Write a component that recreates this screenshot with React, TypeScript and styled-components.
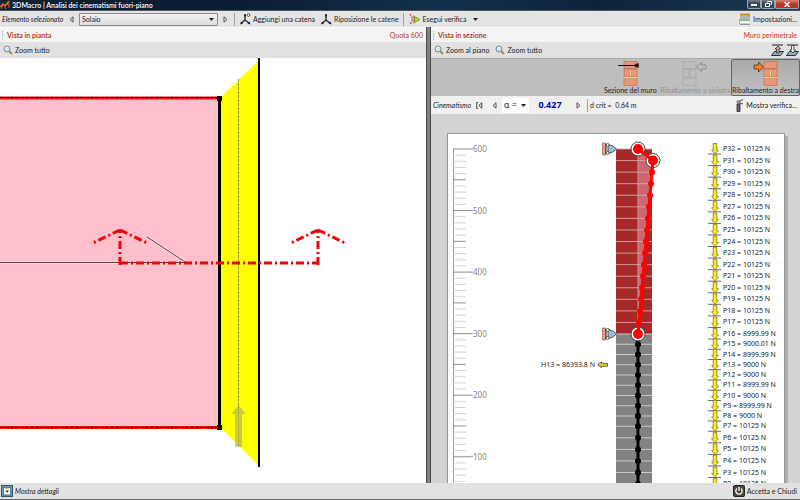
import React from "react";
import styled, { createGlobalStyle, css } from "styled-components";

const GlobalStyle = createGlobalStyle`
  *, *::before, *::after { box-sizing: border-box; }
  html, body, #root { height: 100%; }
  body {
    margin: 0;
    overflow: hidden;
    background: #d3d3d3;
    color: #222;
    font-family: Lato, "Open Sans", sans-serif;
    font-size: 7px;
    line-height: 9px;
  }
  button, input, select { font: inherit; color: inherit; }
  svg { display: block; flex: none; }
`;

const Shell = styled.div`
  display: flex;
  flex-direction: column;
  height: 100vh;
  border-bottom: 1px solid #6b6b6b;
`;

const TitleBar = styled.header`
  display: flex;
  align-items: center;
  height: 11px;
  flex: none;
  color: #fff;
  background: linear-gradient(90deg, #10202f 0%, #0b1d33 30%, #12304c 55%, #0d233b 75%, #1c3a55 100%);
  border-bottom: 1px solid #4d5660;
`;

const AppTitle = styled.h1`
  margin: 0 auto 0 2px;
  font-size: 7px;
  line-height: 9px;
  font-weight: 600;
`;

const WindowButtons = styled.div`
  display: flex;
  align-self: flex-start;
  margin-right: 1px;
`;

const WindowButton = styled.button<{ $close?: boolean }>`
  display: grid;
  place-items: center;
  width: ${(p) => (p.$close ? 24 : 14)}px;
  height: 9px;
  padding: 0;
  border: 1px solid #9aa5b0;
  border-top: 0;
  border-radius: 0 0 2px 2px;
  background: ${(p) =>
    p.$close
      ? "linear-gradient(#d88578, #b8362a 50%, #c2301f)"
      : "linear-gradient(#75828e, #2c3b4a 50%, #3b4b5b)"};
`;

const ToolBar = styled.div<{ $tone?: string; $height: number }>`
  display: flex;
  align-items: center;
  flex: none;
  height: ${(p) => p.$height}px;
  background: ${(p) => p.$tone ?? "#e4e4e4"};
`;

const Spacer = styled.div`
  flex: 1;
`;

const FieldLabel = styled.label<{ $width: number }>`
  width: ${(p) => p.$width}px;
  padding-left: 2px;
  font-style: italic;
  white-space: nowrap;
`;

const ToolButton = styled.button`
  display: flex;
  align-items: center;
  gap: 2px;
  padding: 0 3px;
  border: 0;
  background: none;
  white-space: nowrap;
`;

const Steps = styled(ToolButton)`
  justify-content: center;
  width: 15px;
  padding: 0;
`;

const SelectWrap = styled.div<{ $width: number; $plain?: boolean }>`
  display: grid;
  grid-template-columns: 1fr 8px;
  align-items: center;
  width: ${(p) => p.$width}px;
  height: ${(p) => (p.$plain ? 15 : 13)}px;
  ${(p) =>
    p.$plain
      ? css`
          background: #fff;
        `
      : css`
          border: 1px solid #8b8b8b;
          border-radius: 1px;
          background: linear-gradient(#f1f1f1, #dedede);
        `}
  svg { grid-area: 1 / 2; pointer-events: none; }
`;

const Select = styled.select<{ $size?: number }>`
  grid-area: 1 / 1 / 2 / 3;
  width: 100%;
  padding: 0 2px;
  border: 0;
  outline: 0;
  appearance: none;
  background: none;
  font-size: ${(p) => p.$size ?? 7}px;
  line-height: 10px;
`;

const Divider = styled.div`
  width: 1px;
  height: 13px;
  margin: 0 2px 0 1px;
  background: #a2a2a2;
`;

const Workspace = styled.main`
  display: grid;
  grid-template-columns: minmax(0, 426fr) 5px minmax(0, 369fr);
  flex: 1;
  min-height: 0;
`;

const Pane = styled.section`
  display: flex;
  flex-direction: column;
  min-width: 0;
  min-height: 0;
`;

const PaneHeader = styled.div`
  display: flex;
  align-items: center;
  justify-content: space-between;
  flex: none;
  height: 15px;
  padding: 0 3px 0 2px;
  background: #f4f4f4;
  border-top: 1px solid #fcfcfc;
  color: #b4401c;
`;

const PaneTitle = styled.h2`
  margin: 0;
  padding-left: 4px;
  border-left: 1px dotted #aaa;
  font-size: 7px;
  line-height: 9px;
  font-weight: 700;
`;

const Splitter = styled.div`
  border: solid #4a4a4a;
  border-width: 0 1px;
  background: #808080;
`;

const PlanCanvas = styled.div`
  flex: 1;
  min-height: 0;
  overflow: hidden;
  background: #fff;
`;

const Ribbon = styled.div`
  display: flex;
  justify-content: flex-end;
  flex: none;
  height: 38px;
  background: #bebebe;
  border-top: 1px solid #acacac;
`;

const RibbonButton = styled.button<{ $active?: boolean }>`
  display: flex;
  flex-direction: column;
  align-items: center;
  min-width: 58px;
  padding: 1px 0 0;
  border: 1px solid ${(p) => (p.$active ? "#666" : "transparent")};
  border-radius: 2px;
  background: ${(p) => (p.$active ? "linear-gradient(#a9a9a9, #c2c2c2)" : "none")};
  white-space: nowrap;
  &:disabled { color: #919191; }
`;

const ValueInput = styled.input`
  width: 42px;
  padding: 0;
  border: 0;
  background: none;
  color: #0000b4;
  font-family: "Noto Sans", sans-serif;
  font-size: 9px;
  font-weight: 700;
  line-height: 12px;
  text-align: center;
`;

const Reading = styled.output`
  white-space: pre;
`;

const SectionDesk = styled.div`
  flex: 1;
  min-height: 0;
  padding: 19px 15px 0 16px;
  overflow: hidden;
  background: #d3d3d3;
`;

const Paper = styled.div`
  height: 100%;
  overflow: hidden;
  background: #fff;
  border: 1px solid #969696;
  border-bottom: 0;
  box-shadow: 3px 3px 0 #adadad;
`;

const SvgLabel = styled.text<{ $scale?: boolean }>`
  fill: ${(p) => (p.$scale ? "#858585" : "#222")};
  font-family: "Noto Sans", sans-serif;
  font-size: ${(p) => (p.$scale ? 8 : 7)}px;
`;

const StatusBar = styled(ToolBar)`
  justify-content: space-between;
`;

const DetailsButton = styled(ToolButton)`
  padding: 0 1px;
`;

const Magnifier = () => (
  <svg width="10" height="10" viewBox="0 0 10 10">
    <path d="M6 6l3 3" stroke="#a08848" strokeWidth="2" />
    <circle cx="4" cy="4" r="3" fill="#cfe2f2" stroke="#7d8b98" />
    <path d="M2.500 4a2 2 0 0 1 2-1.700" fill="none" stroke="#fff" />
  </svg>
);

const Step = ({ back }: { back?: boolean }) => (
  <svg width="5" height="7" viewBox="0 0 5 7">
    <path d={back ? "M4 .8v5.4L1 3.5z" : "M1 .8v5.4L4 3.5z"} fill="#eee" stroke="#444" strokeWidth=".9" />
  </svg>
);

const First = () => (
  <svg width="7" height="7" viewBox="0 0 7 7">
    <path d="M2 .5H.7v6H2M5.800 .8v5.400L2.800 3.500z" fill="none" stroke="#333" strokeWidth=".9" />
  </svg>
);

const Caret = () => (
  <svg width="5" height="3" viewBox="0 0 5 3">
    <path d="M0 0h5L2.500 3z" fill="#222" />
  </svg>
);

const ChainIcon = ({ ring }: { ring?: boolean }) => (
  <svg width="11" height="12" viewBox="0 0 11 12">
    <path d="M5 1v6L1 10.500M5 7l4.500 3.500" fill="none" stroke="#222" strokeWidth="1.300" />
    <path d="M0 11.500l1-3 2 2zM10.500 11.500l-3-1 2-2zM4 1.500h2v2H4z" fill="#222" />
    {ring && <circle cx="8.500" cy="2" r="1.400" fill="#fff" stroke="#333" strokeWidth=".8" />}
  </svg>
);

const RunIcon = () => (
  <svg width="12" height="13" viewBox="0 0 12 13">
    <path d="M1 1l2 3v4L1 12" fill="none" stroke="#d33" strokeWidth="1.200" strokeDasharray="2 1" />
    <path d="M5 2.500v8M5 6.500h1" stroke="#666" />
    <path d="M5.500 3.500l5.500 3-5.500 3z" fill="#b5d21c" stroke="#6f8c1a" strokeWidth=".7" />
  </svg>
);

const SettingsIcon = () => (
  <svg width="12" height="12" viewBox="0 0 12 12">
    <path d="M1 1.300h10" stroke="#d9902b" strokeWidth="1.800" />
    <path d="M1 3h10M1 5h9M1 11.300h10" stroke="#667" strokeWidth=".8" />
    <path d="M0 7h11" stroke="#37b34a" strokeWidth="1.200" />
    <path d="M1 9.300h9" stroke="#fff" strokeWidth="1.500" />
    <path d="M10.500 2v3M.5 8v3" stroke="#888" strokeWidth=".7" />
  </svg>
);

const FloorIcon = ({ down }: { down?: boolean }) => (
  <svg width="13" height="12" viewBox="0 0 13 12">
    <path d="M1 1h11" stroke="#55665a" strokeWidth="1.500" />
    <path d="M3.500 7.500h9l-3 4h-9z" fill="#8fb0bd" stroke="#25343c" />
    <path
      d={down ? "M5.500 1.500h2.500V6h1.500L7 9 4 6h1.500z" : "M5.500 9H8V5h1.500L7 2 4 5h1.500z"}
      fill={down ? "#e8e8e8" : "#c9a29c"}
      stroke="#333"
      strokeWidth=".8"
    />
  </svg>
);

const CheckFigure = () => (
  <svg width="9" height="13" viewBox="0 0 9 13">
    <path d="M2 5h3v7.500H2z" fill="#667" stroke="#222" strokeWidth=".8" />
    <circle cx="3.500" cy="3" r="1.500" fill="#aebfca" stroke="#333" strokeWidth=".7" />
    <path d="M5 2l3-1.500M5 4l3 1" stroke="#444" />
  </svg>
);

type WallKind = "section" | "left" | "right";

const WallIcon = ({ kind }: { kind: WallKind }) => {
  const off = kind === "left";
  const brick = off ? "#bdbdbd" : "#e8977a";
  const line = off ? "#a4a4a4" : "#b9684c";
  const x = kind === "left" ? 6 : kind === "right" ? 17 : 12;
  return (
    <svg width="36" height="25" viewBox="0 0 36 25">
      <g fill={brick} stroke={line} strokeWidth=".6">
        <rect x={x} y=".5" width="13" height="7" />
        <rect x={x} y="8" width="6" height="8" />
        <rect x={x + 7} y="8" width="6" height="8" />
        <rect x={x} y="17.500" width="13" height="7" />
      </g>
      {!off && <path d={`M${x} 16.700h13M${x + 6.5} 9v6`} stroke="#f1d28b" strokeWidth="1.200" />}
      {kind === "section" && <path d="M6 4.500h20M26 2v5M23 3l3 1.500L23 6" fill="none" stroke="#111" strokeWidth="1.200" />}
      {kind === "left" && <path d="M19.500 6l5-4.500V4H29v4h-4.500v2.500z" fill="#bebebe" stroke="#8e8e8e" />}
      {kind === "right" && <path d="M16.500 6l-5-5v3H7v4h4.500v3z" fill="#f08330" stroke="#6d4224" />}
    </svg>
  );
};

const Logo = () => (
  <svg width="10" height="10" viewBox="0 0 10 10">
    <path d="M0 7l3-3 2 2 4-5" fill="none" stroke="#ee6b2d" strokeWidth="1.500" />
    <path d="M3 4L1.500 9M5 6l.5 3M9 1v7M6 4l3 1" fill="none" stroke="#d8542a" />
  </svg>
);

const DetailsIcon = () => (
  <svg width="12" height="12" viewBox="0 0 12 12">
    <rect x=".5" y=".5" width="11" height="11" fill="#6a98b8" stroke="#2e4f68" />
    <rect x="2.500" y="2.500" width="7" height="7.500" fill="#f2f7f8" stroke="#3e6079" strokeWidth=".7" />
    <path d="M4.500 5.500h3.500L6.200 7.500z" fill="#111" />
    <path d="M4 3.500h4" stroke="#d8c477" />
  </svg>
);

const PowerIcon = () => (
  <svg width="12" height="12" viewBox="0 0 12 12">
    <rect x=".5" y=".5" width="11" height="11" rx="1" fill="#4b443c" stroke="#222" />
    <path d="M4 3.500a3.200 3.200 0 1 0 4 0M6 2v4" fill="none" stroke="#fff" strokeWidth="1.300" />
  </svg>
);

const SectionMarker = ({ x }: { x: number }) => (
  <path d={`M${x} 207V172M${x} 172l-27 13M${x} 172l27 13`} />
);

const PlanDrawing = () => (
  <svg width="100%" height="425" role="img" aria-label="Pianta del solaio">
    <rect x="0" y="40" width="219" height="329" fill="#ffbfcb" />
    <path d="M221 39L258 3V407L221 370z" fill="#ffff00" />
    <path d="M238.500 21V389" stroke="#96963c" strokeDasharray="3 1" />
    <path d="M235 389V356H231L238.500 347 246 356H242V389z" fill="#b4b450" fillOpacity=".65" />
    <path d="M0 40H219M0 369.500H219" stroke="#ee1010" strokeWidth="3" />
    <path d="M0 39.500H219M0 369.500H219" stroke="#111" strokeDasharray="4 1" />
    <path d="M219.500 39V371" stroke="#000" strokeWidth="3" />
    <path d="M217 38h5v5h-5zM217 367h5v5h-5z" fill="#000" />
    <path d="M259 0V409" stroke="#000" strokeWidth="2" />
    <path d="M0 204.500H186L147 179" fill="none" stroke="#fff" strokeWidth="2" opacity=".6" />
    <path d="M0 204.500H186L147 179" fill="none" stroke="#333" strokeWidth=".9" />
    <g fill="none" stroke="#ee0606" strokeWidth="3" strokeDasharray="8 3 2 3">
      <path d="M120 205H318" />
      <SectionMarker x={120} />
      <SectionMarker x={318} />
    </g>
  </svg>
);

const TOP = 15;
const HINGE = 200;
const AXIS = 190;
const upperStep = (HINGE - TOP) / 16;
const lowerStep = 10.25;

/* Node heights from P32 at the top of the wall down to P2. */
const nodeY = (n: number) => {
  if (n >= 16) return TOP + (32 - n) * upperStep;
  if (n >= 7) return HINGE + (16 - n) * lowerStep;
  return HINGE + 9 * lowerStep + (7 - n) * upperStep;
};

const loadText: Record<number, string> = {
  16: "8999.99", 15: "9000.01", 14: "8999.99", 13: "9000", 12: "9000",
  11: "8999.99", 10: "9000", 9: "8999.99", 8: "9000",
};

const nodes = Array.from({ length: 31 }, (_, i) => 32 - i);
const nodeX = (n: number) => (n === 32 || n <= 16 ? AXIS : AXIS + (n - 16));

const Support = ({ y }: { y: number }) => (
  <g transform={`translate(154 ${y})`}>
    <path d="M.5-6h3V6h-3z" fill="#e4a080" stroke="#8a6250" strokeWidth=".7" />
    <path d="M4-5v10" stroke="#333" />
    <path d="M6-4.500Q11-4 14.500 0 11 4 6 4.500z" fill="#9cc0d2" stroke="#45515a" strokeWidth=".9" />
    <circle cx="5.700" cy="-4" r="1.500" fill="#fff" stroke="#333" strokeWidth=".8" />
    <circle cx="5.700" cy="4" r="1.500" fill="#fff" stroke="#333" strokeWidth=".8" />
  </g>
);

const Hinge = ({ x, y }: { x: number; y: number }) => (
  <g>
    <circle cx={x} cy={y} r="7" fill="#fff" stroke="#333" strokeWidth=".9" />
    <circle cx={x} cy={y} r="5" fill="#ff0000" />
  </g>
);

const Ruler = () => (
  <g>
    <path d={`M5.500 ${TOP}V420`} stroke="#999" />
    {Array.from({ length: 60 }, (_, i) => {
      const y = TOP + i * 6.155;
      const major = i % 10 === 0;
      const half = i % 5 === 0;
      return (
        <path
          key={i}
          d={`M5 ${y}H${major ? 25 : 18}`}
          stroke={half ? "#909090" : "#d4d4d4"}
        />
      );
    })}
    {[600, 500, 400, 300, 200, 100].map((v, i) => (
      <SvgLabel key={v} $scale x={25} y={TOP + i * 61.55 + 3}>
        {v}
      </SvgLabel>
    ))}
  </g>
);

const SectionDrawing = () => (
  <svg width="100%" height="420" role="img" aria-label="Sezione del muro">
    <Ruler />
    <rect x="168" y={TOP} width="36" height={HINGE - TOP} fill="#a72828" />
    <rect x="168" y={HINGE} width="36" height="230" fill="#828282" />
    <path d={`M${AXIS} ${TOP}L205 ${nodeY(31)}L${AXIS} ${HINGE}z`} fill="#cd6670" />
    <path d={`M${AXIS} ${TOP}V${HINGE}`} stroke="#c49a9a" />
    {nodes.map((n) => (
      <path key={n} d={`M168 ${nodeY(n)}h36`} stroke={n > 16 ? "#cfaaa5" : "#d2d2d2"} strokeWidth=".9" />
    ))}
    <path d={`M${AXIS} ${HINGE}V420`} stroke="#000" strokeWidth="3" />
    {nodes.filter((n) => n < 16).map((n) => (
      <circle key={n} cx={AXIS} cy={nodeY(n)} r="3" fill="#000" />
    ))}
    <Support y={TOP} />
    <Support y={HINGE} />
    <Hinge x={AXIS} y={TOP} />
    <Hinge x={205} y={nodeY(31)} />
    <Hinge x={AXIS} y={HINGE} />
    <path d={`M${AXIS} ${TOP}L205 ${nodeY(31)}L${AXIS} ${HINGE}`} fill="none" stroke="#ff0000" strokeWidth="3" />
    {nodes.filter((n) => n > 16 && n < 31).map((n) => (
      <circle key={n} cx={nodeX(n)} cy={nodeY(n)} r="3" fill="#ff0000" />
    ))}
    <SvgLabel x={147} y={nodeY(13) + 2} textAnchor="end">
      H13 = 86393.8 N
    </SvgLabel>
    <path
      transform={`translate(149 ${nodeY(13)})`}
      d="M.5 0l4-3v1.500h6v3h-6V3z"
      fill="#d6cc3a"
      stroke="#55501e"
      strokeWidth=".8"
    />
    {nodes.map((n) => (
      <g key={n}>
        <path d={`M260 ${nodeY(n) + 5}h13`} stroke="#444" strokeWidth=".8" />
        <path
          transform={`translate(267 ${nodeY(n)})`}
          d="M-1.800-5.500h3.600V1H3.500L0 5-3.500 1h1.700z"
          fill="#fff000"
          stroke="#6b6440"
          strokeWidth=".7"
        />
        <SvgLabel x={275} y={nodeY(n) + 2}>
          {`P${n} = ${loadText[n] ?? "10125"} N`}
        </SvgLabel>
      </g>
    ))}
  </svg>
);

const App = () => (
  <>
    <GlobalStyle />
    <Shell>
      <TitleBar>
        <Logo />
        <AppTitle>3DMacro | Analisi dei cinematismi fuori-piano</AppTitle>
        <WindowButtons>
          <WindowButton aria-label="Riduci a icona">
            <svg width="6" height="5"><path d="M0 3h6" stroke="#fff" strokeWidth="2" /></svg>
          </WindowButton>
          <WindowButton aria-label="Ripristina">
            <svg width="7" height="6"><path d="M2.500 1.500V.5h4v3h-1M.5 2.500h4v3h-4z" fill="none" stroke="#fff" /></svg>
          </WindowButton>
          <WindowButton $close aria-label="Chiudi">
            <svg width="6" height="5"><path d="M.5 0l5 5M5.500 0l-5 5" stroke="#fff" strokeWidth="1.500" /></svg>
          </WindowButton>
        </WindowButtons>
      </TitleBar>

      <ToolBar $height={16}>
        <FieldLabel $width={64} htmlFor="element">Elemento selezionato</FieldLabel>
        <Steps aria-label="Elemento precedente"><Step back /></Steps>
        <SelectWrap $width={139}>
          <Select id="element" defaultValue="Solaio">
            <option>Solaio</option>
          </Select>
          <Caret />
        </SelectWrap>
        <Steps aria-label="Elemento successivo"><Step /></Steps>
        <Divider />
        <ToolButton><ChainIcon ring />Aggiungi una catena</ToolButton>
        <ToolButton><ChainIcon />Riposizione le catene</ToolButton>
        <Divider />
        <ToolButton><RunIcon />Esegui verifica<Steps as="span"><Caret /></Steps></ToolButton>
        <Spacer />
        <ToolButton><SettingsIcon />Impostazioni...</ToolButton>
      </ToolBar>

      <Workspace>
        <Pane>
          <PaneHeader>
            <PaneTitle>Vista in pianta</PaneTitle>
            <span>Quota 600</span>
          </PaneHeader>
          <ToolBar $height={16} $tone="#e1e1e1">
            <ToolButton><Magnifier />Zoom tutto</ToolButton>
          </ToolBar>
          <PlanCanvas><PlanDrawing /></PlanCanvas>
        </Pane>

        <Splitter role="separator" aria-orientation="vertical" />

        <Pane>
          <PaneHeader>
            <PaneTitle>Vista in sezione</PaneTitle>
            <span>Muro perimetrale</span>
          </PaneHeader>
          <ToolBar $height={16} $tone="#e1e1e1">
            <ToolButton><Magnifier />Zoom al piano</ToolButton>
            <ToolButton><Magnifier />Zoom tutto</ToolButton>
            <Spacer />
            <Steps aria-label="Piano superiore"><FloorIcon /></Steps>
            <Steps aria-label="Piano inferiore"><FloorIcon down /></Steps>
          </ToolBar>
          <Ribbon>
            <RibbonButton><WallIcon kind="section" />Sezione del muro</RibbonButton>
            <RibbonButton disabled><WallIcon kind="left" />Ribaltamento a sinistra</RibbonButton>
            <RibbonButton $active aria-pressed="true"><WallIcon kind="right" />Ribaltamento a destra</RibbonButton>
          </Ribbon>
          <ToolBar $height={18} $tone="#f0f0f0">
            <FieldLabel $width={41} htmlFor="alpha">Cinematismo</FieldLabel>
            <Steps aria-label="Primo cinematismo"><First /></Steps>
            <Steps aria-label="Cinematismo precedente"><Step back /></Steps>
            <SelectWrap $width={27} $plain>
              <Select $size={9} aria-label="Parametro" defaultValue="α =">
                <option>α =</option>
              </Select>
              <Caret />
            </SelectWrap>
            <ValueInput id="alpha" defaultValue="0.427" />
            <Steps aria-label="Cinematismo successivo"><Step /></Steps>
            <Divider />
            <Reading>d crit =  0.64 m</Reading>
            <Spacer />
            <ToolButton><CheckFigure />Mostra verifica...</ToolButton>
          </ToolBar>
          <SectionDesk>
            <Paper><SectionDrawing /></Paper>
          </SectionDesk>
        </Pane>
      </Workspace>

      <StatusBar as="footer" $height={16} $tone="#e2e2e2">
        <DetailsButton><DetailsIcon /><em>Mostra dettagli</em></DetailsButton>
        <ToolButton><PowerIcon />Accetta e Chiudi</ToolButton>
      </StatusBar>
    </Shell>
  </>
);

export default App;
